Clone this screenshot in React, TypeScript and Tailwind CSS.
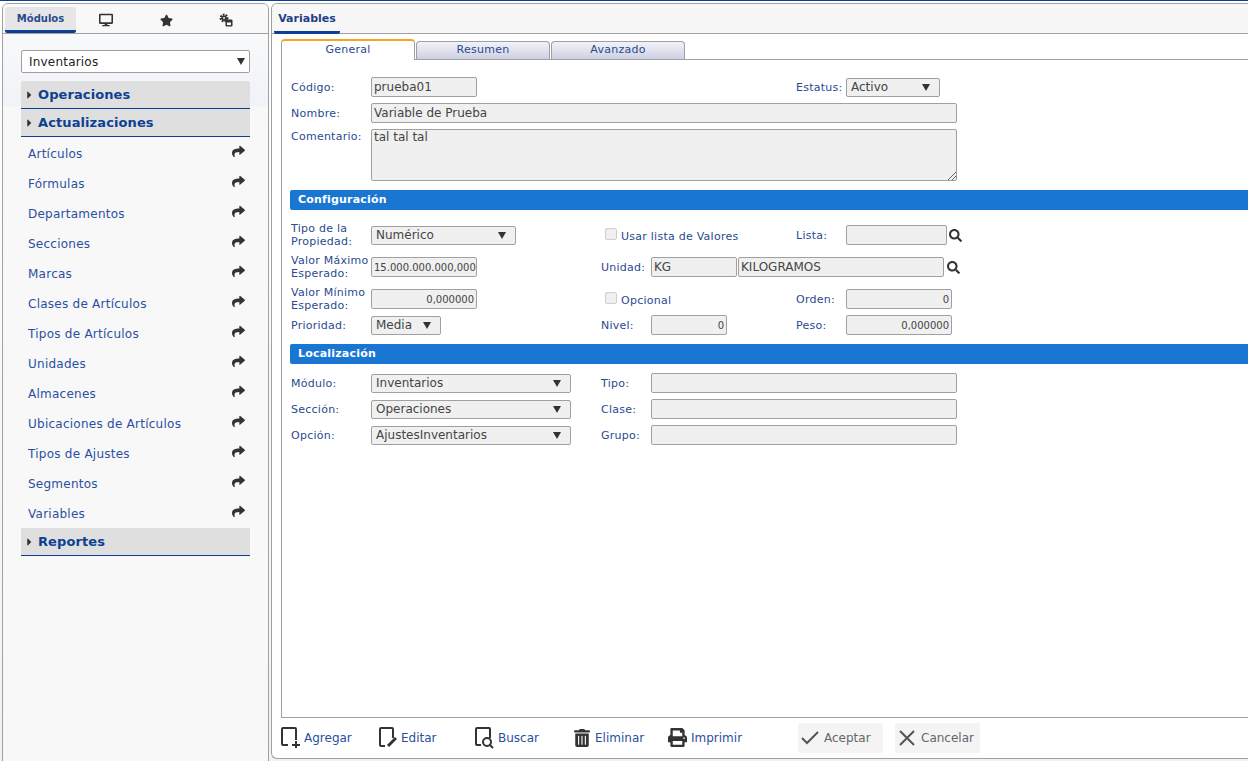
import React from "react";
import { FaDesktop, FaStar, FaShare, FaSearch, FaTrashAlt, FaPrint, FaCaretRight } from "react-icons/fa";

const items = ["Artículos","Fórmulas","Departamentos","Secciones","Marcas","Clases de Artículos","Tipos de Artículos","Unidades","Almacenes","Ubicaciones de Artículos","Tipos de Ajustes","Segmentos","Variables"];

function Accordion({ title, top }: { title: string; top?: boolean }) {
  return (
    <div className={`h-7 flex items-center bg-[#dfdfdf] border-b border-[#0d3f94] pl-[5px] ${top ? "rounded-t-[2px]" : ""}`}>
      <FaCaretRight className="text-[#333] text-[12px] w-[7px] mr-[5px]" />
      <span className="text-[13px] font-bold text-[#0d3f94] tracking-[0.1px]">{title}</span>
    </div>
  );
}

function Tri() {
  return <svg width="8" height="7" viewBox="0 0 8 7" className="shrink-0"><path d="M0 0h8L4 7z" fill="#333" /></svg>;
}

function Sel({ w, h = "h-[19px]", v }: { w: string; h?: string; v: string }) {
  return (
    <div className={`${w} ${h} flex items-center justify-between border border-[#a0a0a0] rounded-[2px] bg-[#f0f0f0] pl-1 pr-[9px] text-[12px] text-[#444]`}>
      <span>{v}</span><Tri />
    </div>
  );
}

function Inp({ w, v = "", right, small }: { w: string; v?: string; right?: boolean; small?: boolean }) {
  return (
    <div className={`${w} h-5 shrink-0 flex items-center border border-[#a0a0a0] rounded-[2px] bg-[#f0f0f0] overflow-hidden whitespace-nowrap text-[#444] ${small ? "text-[10px]" : "text-[12px]"} ${right ? "justify-end pr-[2px]" : "pl-[2px]"}`}>
      {v}
    </div>
  );
}

function L({ children, className = "" }: { children: React.ReactNode; className?: string }) {
  return <div className={`text-[11px] leading-[13px] text-[#2a4a90] tracking-[0.25px] ${className}`}>{children}</div>;
}

function Row({ className = "", children }: { className?: string; children: React.ReactNode }) {
  return <div className={`grid grid-cols-[80px_230px_50px_145px_50px_1fr] items-center ${className}`}>{children}</div>;
}

function Bar({ title, className = "" }: { title: string; className?: string }) {
  return <div className={`h-5 bg-[#1976d2] rounded-l-[2px] ml-[-1px] pl-2 flex items-center text-white font-bold text-[11px] tracking-[0.2px] ${className}`}>{title}</div>;
}

function Check({ label }: { label: string }) {
  return (
    <div className="col-span-2 pl-[4px] flex items-center h-full">
      <span className="w-3 h-3 mr-1 border border-[#cfcfcf] rounded-[2px] bg-[#efefef] -mt-[2px]" />
      <L className="mt-[3px]">{label}</L>
    </div>
  );
}

function Tab({ label, active }: { label: string; active?: boolean }) {
  return active ? (
    <div className="w-[134px] h-[21px] -mb-px relative z-10 bg-white border border-b-0 border-[#a0a0a0] border-t-2 border-t-[#f5a623] rounded-t-[4px] flex items-center justify-center text-[11px] text-[#2a4a90] tracking-[0.25px]">{label}</div>
  ) : (
    <div className="w-[134px] h-[18px] mr-px bg-gradient-to-b from-[#f2f3f8] to-[#cdd0e2] border border-b-0 border-[#a0a0a0] rounded-t-[4px] flex items-center justify-center text-[11px] text-[#2a4a90] tracking-[0.25px]">{label}</div>
  );
}

function Tool({ icon, label, w }: { icon: React.ReactNode; label: string; w: string }) {
  return (
    <div className={`${w} flex items-center h-[30px]`}>
      <span className="w-[19px] h-[24px] flex items-center justify-center shrink-0 mr-1">{icon}</span>
      <span className="text-[12px] text-[#2a4fa0]">{label}</span>
    </div>
  );
}

const Search = () => <FaSearch className="text-[#333] text-[13px] ml-[2px] shrink-0" />;

export default function App() {
  return (
    <div className="w-[1248px] h-[761px] overflow-hidden bg-gradient-to-b from-[#ffffff] to-[#eff3f8] border-t border-t-[#0d3f94] flex pl-[2px] pt-[2px]" style={{ fontFamily: '"DejaVu Sans", Verdana, sans-serif' }}>
      {/* left */}
      <aside className="w-[267px] h-[770px] shrink-0 border border-[#a0a0a0] rounded-t-[6px] rounded-b-[6px] bg-[#f8f8f8] overflow-hidden">
        <div className="h-[30px] flex border-b border-[#a0a0a0] pl-[2px] pt-[3px] bg-[#f8f8f8]">
          <div className="w-[71px] h-[26px] bg-[#e6e6e6] border-b-[3px] border-[#0d3f94] rounded-t-[3px] rounded-b-[2px] flex items-center justify-center text-[10px] font-bold text-[#2a4a90]">Módulos</div>
          <div className="w-[60px] flex items-center justify-center text-[#333] text-[14px] ml-0"><FaDesktop /></div>
          <div className="w-[60px] flex items-center justify-center text-[#333] text-[13px]"><FaStar /></div>
          <div className="w-[60px] flex items-center justify-center">
            <svg width="14" height="14" viewBox="0 0 14 14"><circle cx="5" cy="5" r="3.2" fill="none" stroke="#333" strokeWidth="2.4" strokeDasharray="1.7 1" /><circle cx="5" cy="5" r="2.6" fill="#333" /><circle cx="5" cy="5" r="1" fill="#f8f8f8" /><rect x="6.5" y="6.5" width="7" height="7" rx="1" fill="#333" /><rect x="8" y="9.5" width="4" height="2.6" fill="#f8f8f8" /></svg>
          </div>
        </div>
        <div className="px-[18px] pt-[16px] bg-gradient-to-b from-[#f8f9fb] to-[#f0f3f7] h-[72px]">
          <div className="h-[23px] flex items-center justify-between bg-white border border-[#a0a0a0] rounded-[2px] pl-[7px] pr-[4px] text-[12px] text-[#222] tracking-[0.2px]">
            <span>Inventarios</span><Tri />
          </div>
        </div>
        <div className="px-[18px] -mt-[25px]">
          <Accordion title="Operaciones" top />
          <Accordion title="Actualizaciones" />
          <ul className="mt-[1px]">
            {items.map((t) => (
              <li key={t} className="h-[30px] flex items-center justify-between pl-[7px] pr-[5px]">
                <span className="text-[12px] text-[#2a4fa0] tracking-[0.25px] mt-[2px]">{t}</span>
                <FaShare className="text-[#333] text-[13px] -mt-[4px]" />
              </li>
            ))}
          </ul>
          <Accordion title="Reportes" />
        </div>
      </aside>

      {/* right */}
      <main className="ml-[2px] w-[1000px] h-[756px] shrink-0 border-l border-t border-b border-[#a0a0a0] rounded-l-[6px] bg-white overflow-hidden flex flex-col">
        <div className="h-[30px] shrink-0 bg-[#f7f7f7] border-b border-[#a0a0a0] pl-[2px] flex items-end">
          <div className="w-[66px] h-[26px] border-b-[3px] border-[#0d3f94] rounded-b-[2px] flex items-center justify-center text-[11px] font-bold text-[#1f3f86] -mb-px">Variables</div>
        </div>
        <div className="pl-[9px] pt-[5px] flex-1 flex flex-col min-h-0">
          <div className="flex pl-0 items-end h-[21px] border-b border-[#a0a0a0] shrink-0">
            <Tab label="General" active />
            <div className="w-px" />
            <Tab label="Resumen" />
            <Tab label="Avanzado" />
          </div>
          <section className="flex-1 border-l border-b border-[#a0a0a0] pl-[9px] min-h-0">
            <Row className="h-5 mt-[17px]">
              <L>Código:</L><Inp w="w-[106px]" v="prueba01" />
              <div /><div /><L>Estatus:</L><Sel w="w-[94px]" v="Activo" />
            </Row>
            <Row className="h-5 mt-[6px]">
              <L>Nombre:</L><div className="col-span-5"><Inp w="w-[586px]" v="Variable de Prueba" /></div>
            </Row>
            <Row className="h-[52px] mt-[6px] !items-start">
              <L className="mt-[1px]">Comentario:</L>
              <div className="col-span-5 relative w-[586px] h-[52px] border border-[#a0a0a0] rounded-[2px] bg-[#f0f0f0] pl-[2px] text-[12px] leading-[15px] text-[#444]">
                tal tal tal
                <svg width="9" height="9" viewBox="0 0 9 9" className="absolute right-0 bottom-0"><path d="M1 9L9 1M5 9l4-4" stroke="#666" strokeWidth="1" /></svg>
              </div>
            </Row>
            <Bar title="Configuración" className="mt-[9px]" />
            <Row className="h-5 mt-[12px]">
              <L>Tipo de la<br />Propiedad:</L><Sel w="w-[145px]" v="Numérico" />
              <Check label="Usar lista de Valores" />
              <L>Lista:</L>
              <div className="flex items-center"><Inp w="w-[101px]" /><Search /></div>
            </Row>
            <Row className="h-5 mt-[12px]">
              <L className="whitespace-nowrap">Valor Máximo<br />Esperado:</L><Inp w="w-[106px]" v="15.000.000.000,0000" small />
              <L>Unidad:</L>
              <div className="col-span-3 flex items-center gap-px"><Inp w="w-[86px]" v="KG" /><Inp w="w-[206px]" v="KILOGRAMOS" /><Search /></div>
            </Row>
            <Row className="h-5 mt-[12px]">
              <L className="whitespace-nowrap">Valor Mínimo<br />Esperado:</L><Inp w="w-[106px]" v="0,000000" right small />
              <Check label="Opcional" />
              <L>Orden:</L><Inp w="w-[106px]" v="0" right small />
            </Row>
            <Row className="h-5 mt-[9px]">
              <L>Prioridad:</L><Sel w="w-[70px]" v="Media" />
              <L>Nivel:</L><Inp w="w-[76px]" v="0" right small />
              <L>Peso:</L><Inp w="w-[106px]" v="0,000000" right small />
            </Row>
            <Bar title="Localización" className="mt-[9px]" />
            <Row className="h-5 mt-[9px]">
              <L>Módulo:</L><Sel w="w-[200px]" v="Inventarios" />
              <L>Tipo:</L><div className="col-span-3"><Inp w="w-[306px]" /></div>
            </Row>
            <Row className="h-5 mt-[6px]">
              <L>Sección:</L><Sel w="w-[200px]" v="Operaciones" />
              <L>Clase:</L><div className="col-span-3"><Inp w="w-[306px]" /></div>
            </Row>
            <Row className="h-5 mt-[6px]">
              <L>Opción:</L><Sel w="w-[200px]" v="AjustesInventarios" />
              <L>Grupo:</L><div className="col-span-3"><Inp w="w-[306px]" /></div>
            </Row>
          </section>
          <footer className="h-[40px] shrink-0 flex items-center pb-[1px]">
            <Tool w="w-[97px]" label="Agregar" icon={
              <svg width="19" height="21" viewBox="0 0 19 21" fill="none" stroke="#333" strokeWidth="2"><path d="M7 18H2a1 1 0 0 1-1-1V2a1 1 0 0 1 1-1h12a1 1 0 0 1 1 1v11" /><path d="M15 14v7M11 18h8" /></svg>} />
            <Tool w="w-[97px]" label="Editar" icon={
              <svg width="19" height="21" viewBox="0 0 19 21" fill="none" stroke="#333" strokeWidth="2"><path d="M7 19H3a1 1 0 0 1-1-1V2a1 1 0 0 1 1-1h11a1 1 0 0 1 1 1v9" /><path d="M10 19l8-8" strokeWidth="3" /></svg>} />
            <Tool w="w-[97px]" label="Buscar" icon={
              <svg width="19" height="22" viewBox="0 0 19 22" fill="none" stroke="#333" strokeWidth="2"><path d="M6 18H2a1 1 0 0 1-1-1V2a1 1 0 0 1 1-1h12a1 1 0 0 1 1 1v9" /><circle cx="12" cy="15" r="4" /><path d="M15 18l3 3" /></svg>} />
            <Tool w="w-[96px]" label="Eliminar" icon={<FaTrashAlt className="text-[#333] text-[18px]" />} />
            <Tool w="w-[130px]" label="Imprimir" icon={<FaPrint className="text-[#333] text-[21px]" />} />
            <div className="w-[85px] h-[30px] bg-[#f4f4f4] rounded-[2px] flex items-center text-[12px] text-[#666] mr-[12px]">
              <svg width="18" height="14" viewBox="0 0 18 14" fill="none" stroke="#555" strokeWidth="2" className="ml-[3px] mr-[5px]"><path d="M1 7l5 5L17 1" /></svg>Aceptar
            </div>
            <div className="w-[85px] h-[30px] bg-[#f4f4f4] rounded-[2px] flex items-center text-[12px] text-[#666]">
              <svg width="16" height="16" viewBox="0 0 16 16" fill="none" stroke="#555" strokeWidth="2" className="ml-[4px] mr-[6px]"><path d="M1 1l14 14M15 1L1 15" /></svg>Cancelar
            </div>
          </footer>
        </div>
      </main>
    </div>
  );
}
